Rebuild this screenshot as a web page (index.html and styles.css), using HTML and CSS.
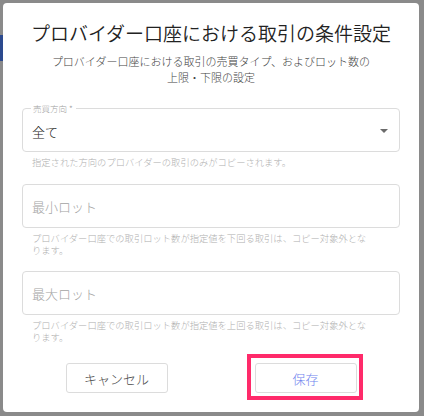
FILE: index.html
```html
<!DOCTYPE html>
<html lang="ja">
<head>
<meta charset="utf-8">
<link rel="stylesheet" href="styles.css">
</head>
<body>
<div class="backdrop">
  <div class="bg-blue"></div>
  <div class="dialog">
    <h1 class="title">プロバイダー口座における取引の条件設定</h1>
    <p class="subtitle">プロバイダー口座における取引の売買タイプ、およびロット数の<br>上限・下限の設定</p>

    <div class="group">
      <div class="field select">
        <span class="label">売買方向 *</span>
        <span class="value">全て</span>
        <span class="arrow"></span>
      </div>
      <p class="helper">指定された方向のプロバイダーの取引のみがコピーされます。</p>
    </div>

    <div class="group">
      <div class="field">
        <span class="placeholder">最小ロット</span>
      </div>
      <p class="helper">プロバイダー口座での取引ロット数が指定値を下回る取引は、コピー対象外となります。</p>
    </div>

    <div class="group">
      <div class="field">
        <span class="placeholder">最大ロット</span>
      </div>
      <p class="helper">プロバイダー口座での取引ロット数が指定値を上回る取引は、コピー対象外となります。</p>
    </div>

    <div class="actions">
      <div class="cell"><button class="btn cancel">キャンセル</button></div>
      <div class="cell"><button class="btn save">保存</button><span class="highlight"></span></div>
    </div>
  </div>
</div>
</body>
</html>
```

FILE: styles.css
```css
* { box-sizing: border-box; }
html, body {
  margin: 0;
  padding: 0;
  background: #8a8a8a;
  font-family: "Noto Sans CJK JP", "Noto Sans", sans-serif;
  font-weight: 300;
}
.backdrop {
  position: relative;
  width: 424px;
  height: 416px;
  padding: 3px 5px 4px 3px;
  background: #8a8a8a;
}
.bg-blue {
  position: absolute;
  left: 0;
  top: 35px;
  width: 3px;
  height: 26px;
  background: #2c4a8e;
}
.dialog {
  position: relative;
  width: 416px;
  height: 409px;
  background: #ffffff;
  border-radius: 4px;
  padding: 16px 19px 19px 19px;
  display: flex;
  flex-direction: column;
}
.title {
  margin: 0;
  font-size: 19px;
  line-height: 28px;
  font-weight: 350;
  color: #222;
  text-align: center;
}
.subtitle {
  margin: 6px 0 0 0;
  font-size: 11px;
  line-height: 16px;
  color: #444;
  text-align: center;
}
.group { margin-top: 23px; }
.group + .group { margin-top: 16px; }
.group:nth-of-type(3) { margin-top: 15px; }
.field {
  position: relative;
  height: 44px;
  border: 1px solid #dcdcdc;
  border-radius: 4px;
  display: flex;
  align-items: center;
  padding: 0 9px;
}
.label {
  position: absolute;
  left: 8px;
  top: -7px;
  padding: 0 3px 0 2px;
  background: #fff;
  font-size: 8.5px;
  line-height: 12px;
  color: #a0a0a0;
}
.value {
  font-size: 13px;
  color: #222;
  margin-top: 2px;
}
.placeholder {
  font-size: 13px;
  color: #a3a3a3;
}
.arrow {
  position: absolute;
  right: 11px;
  top: 20px;
  width: 0;
  height: 0;
  border-left: 4px solid transparent;
  border-right: 4px solid transparent;
  border-top: 4px solid #6b6b6b;
}
.helper {
  margin: 4px 0 0 0;
  padding: 0 25px 0 10px;
  font-size: 9.3px;
  line-height: 12px;
  color: #afafaf;
}
.actions {
  margin-top: auto;
  display: grid;
  grid-template-columns: 1fr 1fr;
}
.cell {
  position: relative;
  display: flex;
  justify-content: center;
}
.btn {
  width: 102px;
  height: 30px;
  background: #fff;
  border: 1px solid #dcdcdc;
  border-radius: 3px;
  font-family: "Noto Sans CJK JP", "Noto Sans", sans-serif;
  font-weight: 300;
  font-size: 13px;
  padding: 0;
}
.cancel { color: #4a4a4a; }
.save { color: #6f84ee; }
.highlight {
  position: absolute;
  left: 36px;
  top: -9px;
  width: 116px;
  height: 46px;
  border: 4px solid #ff2a6a;
}
```
